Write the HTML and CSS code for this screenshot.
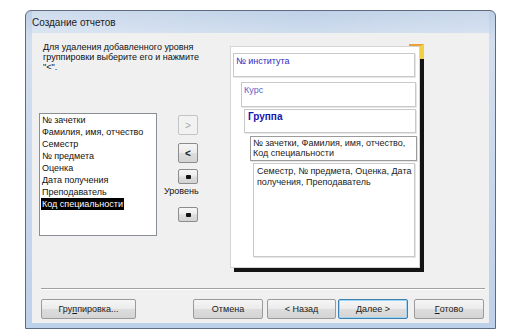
FILE: index.html
```html
<!DOCTYPE html>
<html lang="ru">
<head>
<meta charset="utf-8">
<title>Создание отчетов</title>
<link rel="stylesheet" href="styles.css">
</head>
<body>
<div class="window">
  <div class="titlebar">Создание отчетов</div>
  <div class="client">
    <div class="main">
      <div class="left">
        <p class="instr">Для удаления добавленного уровня<br>группировки выберите его и нажмите<br>"&lt;".</p>
        <div class="listrow">
          <ul class="listbox">
            <li><span>№ зачетки</span></li>
            <li><span>Фамилия, имя, отчество</span></li>
            <li><span>Семестр</span></li>
            <li><span>№ предмета</span></li>
            <li><span>Оценка</span></li>
            <li><span>Дата получения</span></li>
            <li><span>Преподаватель</span></li>
            <li class="selected"><span>Код специальности</span></li>
          </ul>
          <div class="btncol">
            <button class="btn small disabled">&gt;</button>
            <button class="btn small lt">&lt;</button>
            <button class="btn tiny"><span class="dot"></span></button>
            <div class="level-label">Уровень</div>
            <button class="btn tiny down"><span class="dot"></span></button>
          </div>
        </div>
      </div>
      <div class="preview">
        <div class="mark"></div>
        <div class="lvl lvl1">№ института</div>
        <div class="lvl lvl2">Курс</div>
        <div class="lvl lvl3">Группа</div>
        <div class="lvl lvl4">№ зачетки, Фамилия, имя, отчество,<br>Код специальности</div>
        <div class="lvl lvl5">Семестр, № предмета, Оценка, Дата<br>получения, Преподаватель</div>
      </div>
    </div>
    <div class="sep"></div>
    <div class="buttons">
      <button class="btn wide b-group">Гру<u>п</u>пировка...</button>
      <button class="btn wide b-cancel">Отмена</button>
      <button class="btn wide b-back">&lt; Назад</button>
      <button class="btn wide b-next default"><u>Д</u>алее &gt;</button>
      <button class="btn wide b-done"><u>Г</u>отово</button>
    </div>
  </div>
</div>
</body>
</html>
```
FILE: styles.css
```css
* { box-sizing: border-box; }
html, body { margin: 0; padding: 0; background: #ffffff; }
body {
  width: 511px;
  height: 334px;
  overflow: hidden;
  font-family: "Liberation Sans", Arial, sans-serif;
}

.window {
  margin: 10px 0 0 25px;
  width: 471px;
  height: 319px;
  border: 1px solid #5d6c80;
  border-radius: 6px 6px 0 0;
  background: linear-gradient(to bottom, #bccee6 0px, #d2dfef 30px, #bed1ea 100%);
  padding: 0 6px 5px 6px;
  display: flex;
  flex-direction: column;
}

.titlebar {
  height: 22px;
  line-height: 24px;
  font-size: 10px;
  color: #1b1b1b;
  padding-left: 0;
  background: linear-gradient(to right, rgba(255,255,255,0.3), rgba(255,255,255,0.05) 60%, rgba(255,255,255,0.2));
}

.client {
  width: 457px;
  height: 290px;
  background: #f0f0f0;
  display: flex;
  flex-direction: column;
}

.main {
  height: 255px;
  display: flex;
  padding-left: 7px;
}

.left { width: 191px; }

.instr {
  margin: 9px 0 0 4px;
  font-size: 9px;
  line-height: 10px;
  color: #111;
}

.listrow {
  margin-top: 41px;
  display: flex;
}

.listbox {
  list-style: none;
  margin: 0;
  padding: 0 0 0 1px;
  width: 118px;
  height: 123px;
  background: #fff;
  border: 1px solid #8a8f96;
  font-size: 9px;
  line-height: 12px;
  color: #111;
}
.listbox li { height: 12px; }
.listbox li span { padding: 0 1px 0 1px; display: inline-block; }
.listbox li.selected span { background: #000; color: #fff; }

.btncol {
  margin-left: 7px;
  width: 36px;
  padding-top: 2px;
  display: flex;
  flex-direction: column;
  align-items: flex-start;
}

.btn {
  font-family: "Liberation Sans", Arial, sans-serif;
  font-size: 9px;
  color: #1a1a1a;
  border: 1px solid #8c8c8c;
  border-radius: 2px;
  background: linear-gradient(to bottom, #f6f6f6 0%, #ebebeb 48%, #dddddd 52%, #d4d4d4 100%);
  padding: 0;
  margin: 0;
  display: flex;
  align-items: center;
  justify-content: center;
}

.btn.small {
  width: 20px;
  height: 20px;
  margin-left: 14px;
  font-size: 10px;
}
.btn.small.disabled {
  color: #a8a8a8;
  border-color: #c2c4c6;
  background: #f2f2f2;
}
.btn.lt { margin-top: 8px; font-weight: bold; }
.btn.tiny {
  width: 20px;
  height: 15px;
  margin-left: 14px;
  margin-top: 6px;
}
.btn.tiny.down { margin-top: 11px; }
.dot {
  width: 5px;
  height: 4px;
  background: #111;
  border-radius: 1px;
}

.level-label {
  margin-top: 2px;
  font-size: 9px;
  line-height: 10px;
  color: #111;
}

.preview {
  position: relative;
  margin-top: 13px;
  width: 190px;
  height: 222px;
  background: #fff;
  border: 1px solid #d4d4d4;
  box-shadow: 4px 4px 0 #141414;
  padding: 6px 0 0 2px;
}

.mark {
  position: absolute;
  top: -3px;
  right: -5px;
  width: 15px;
  height: 15px;
  border-top: 2px solid #e9a33a;
  border-right: 4px solid #f2cf43;
}

.lvl {
  background: #fff;
  border: 1px solid #c9c9c9;
  box-shadow: 1px 1px 0 #e6e6e6;
  font-size: 9px;
  line-height: 10px;
  padding: 2px 2px;
  white-space: nowrap;
}
.lvl1 {
  width: 182px;
  height: 24px;
  color: #2c2cc4;
}
.lvl2 {
  margin: 5px 0 0 8px;
  width: 175px;
  height: 25px;
  color: #6262c6;
}
.lvl3 {
  margin: 2px 0 0 11px;
  width: 172px;
  height: 24px;
  color: #1515b0;
  font-weight: bold;
  font-size: 10px;
  padding-left: 3px;
}
.lvl4 {
  margin: 3px 0 0 17px;
  width: 167px;
  height: 25px;
  border-color: #9b9b9b;
  color: #222;
  padding-top: 1px;
}
.lvl5 {
  margin: 2px 0 0 20px;
  width: 162px;
  height: 94px;
  color: #222;
  font-size: 9px;
  line-height: 11px;
  padding: 2px 3px;
}

.sep {
  height: 2px;
  margin: 0 4px 0 9px;
  border-top: 1px solid #a0a0a0;
  border-bottom: 1px solid #ffffff;
}

.buttons {
  margin-top: 9px;
  display: flex;
  padding-left: 9px;
}
.btn.wide {
  height: 20px;
  width: 70px;
  border-color: #9a9a9a;
}
.b-group { width: 95px !important; }
.b-cancel { margin-left: 57px; }
.b-back { margin-left: 4px; width: 69px !important; }
.b-next { margin-left: 2px; }
.b-done { margin-left: 6px; }
.btn.default {
  border-color: #3c7fb1;
  box-shadow: inset 0 0 0 1px #9fd5f5;
}
u { text-decoration: underline; }
```
